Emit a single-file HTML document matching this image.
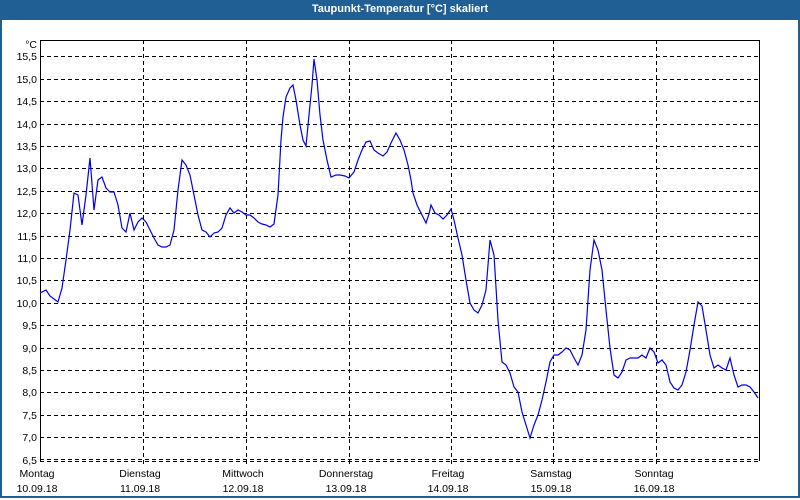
<!DOCTYPE html>
<html><head><meta charset="utf-8"><style>
html,body{margin:0;padding:0;width:800px;height:500px;overflow:hidden;background:#fff;font-family:"Liberation Sans",sans-serif}
.frame{position:absolute;left:0;top:0;width:796px;height:496px;border:2px solid #1f5f94;border-top:none;}
.title{position:absolute;left:0;top:0;width:800px;height:20px;background:#1f5f94;color:#fff;font-weight:bold;font-size:11px;text-align:center;line-height:18px}
svg{position:absolute;left:0;top:0}
</style></head><body>
<div class="frame"></div>
<div class="title">Taupunkt-Temperatur [°C] skaliert</div>
<svg width="800" height="500" font-family="Liberation Sans, sans-serif" font-size="10.5">
<g stroke="#000" stroke-width="1" stroke-dasharray="4,3">
<line x1="40" x2="760" y1="56.5" y2="56.5"/><line x1="40" x2="760" y1="79.5" y2="79.5"/><line x1="40" x2="760" y1="101.5" y2="101.5"/><line x1="40" x2="760" y1="124.5" y2="124.5"/><line x1="40" x2="760" y1="146.5" y2="146.5"/><line x1="40" x2="760" y1="168.5" y2="168.5"/><line x1="40" x2="760" y1="191.5" y2="191.5"/><line x1="40" x2="760" y1="213.5" y2="213.5"/><line x1="40" x2="760" y1="236.5" y2="236.5"/><line x1="40" x2="760" y1="258.5" y2="258.5"/><line x1="40" x2="760" y1="280.5" y2="280.5"/><line x1="40" x2="760" y1="303.5" y2="303.5"/><line x1="40" x2="760" y1="325.5" y2="325.5"/><line x1="40" x2="760" y1="348.5" y2="348.5"/><line x1="40" x2="760" y1="370.5" y2="370.5"/><line x1="40" x2="760" y1="392.5" y2="392.5"/><line x1="40" x2="760" y1="415.5" y2="415.5"/><line x1="40" x2="760" y1="437.5" y2="437.5"/><line x1="40" x2="760" y1="459.5" y2="459.5"/>
<line x1="143.5" x2="143.5" y1="40" y2="464"/><line x1="246.5" x2="246.5" y1="40" y2="464"/><line x1="349.5" x2="349.5" y1="40" y2="464"/><line x1="451.5" x2="451.5" y1="40" y2="464"/><line x1="553.5" x2="553.5" y1="40" y2="464"/><line x1="656.5" x2="656.5" y1="40" y2="464"/>
</g>
<polyline fill="none" stroke="#000" stroke-width="1" points="40.5,461 40.5,40.5 759.5,40.5 759.5,461"/>
<line x1="40" x2="760" y1="461.5" y2="461.5" stroke="#000" stroke-dasharray="4,3"/>
<polyline fill="none" stroke="#0000ee" stroke-width="1.2" points="40,293 46,290 50,296 54,299 58,302 62,288 66,260 70,230 74,193 78,195 82,225 86,195 90,158 94,210 98,180 102,177 106,188 110,192 114,192 118,205 122,228 126,232 130,213 134,230 138,222 142,218 146,222 150,230 154,238 158,245 162,247 166,247 170,245 174,230 178,190 182,160 186,165 190,175 194,195 198,215 202,230 206,232 210,237 214,233 218,232 222,228 226,215 230,208 234,213 238,210 242,212 246,215 250,215 254,218 258,222 262,224 266,225 270,227 274,224 278,195 281,140 283,117 286,97 290,88 293,85 296,100 300,125 303,140 306,146 309,115 312,85 314,59 317,80 320,115 323,140 327,160 331,177 336,175 340,175 345,176 349,178 354,172 358,160 362,150 366,142 370,141 374,150 378,153 383,156 387,152 391,143 396,133 400,140 404,150 408,165 411,180 413,193 417,205 422,215 426,223 429,214 431,205 435,213 439,215 443,219 447,215 451,209 454,220 458,238 462,255 466,280 470,303 474,310 478,313 482,305 486,290 490,240 494,255 498,320 502,362 506,365 510,373 514,387 518,392 522,412 526,425 530,438 534,425 538,415 542,400 546,382 550,362 554,355 558,355 562,352 566,348 570,350 574,358 578,365 582,355 586,330 590,270 594,240 598,250 602,270 606,310 610,348 614,375 618,378 622,372 626,360 630,358 634,358 638,358 642,355 646,358 650,348 654,352 658,363 662,360 666,365 670,382 674,388 678,390 682,385 686,372 690,350 694,325 698,302 702,306 706,330 710,355 714,368 718,365 722,368 726,370 730,358 734,375 738,387 742,385 746,385 750,387 754,392 758,398"/>
<g text-anchor="end" fill="#000">
<text x="37" y="48">°C</text>
<text x="37" y="60">15,5</text><text x="37" y="83">15,0</text><text x="37" y="105">14,5</text><text x="37" y="128">14,0</text><text x="37" y="150">13,5</text><text x="37" y="172">13,0</text><text x="37" y="195">12,5</text><text x="37" y="217">12,0</text><text x="37" y="240">11,5</text><text x="37" y="262">11,0</text><text x="37" y="284">10,5</text><text x="37" y="307">10,0</text><text x="37" y="329">9,5</text><text x="37" y="352">9,0</text><text x="37" y="374">8,5</text><text x="37" y="396">8,0</text><text x="37" y="419">7,5</text><text x="37" y="441">7,0</text><text x="37" y="464">6,5</text>
</g>
<g text-anchor="middle" fill="#000">
<text x="37" y="477">Montag</text><text x="37" y="492">10.09.18</text>
<text x="140" y="477">Dienstag</text><text x="140" y="492">11.09.18</text>
<text x="243" y="477">Mittwoch</text><text x="243" y="492">12.09.18</text>
<text x="346" y="477">Donnerstag</text><text x="346" y="492">13.09.18</text>
<text x="448" y="477">Freitag</text><text x="448" y="492">14.09.18</text>
<text x="551" y="477">Samstag</text><text x="551" y="492">15.09.18</text>
<text x="654" y="477">Sonntag</text><text x="654" y="492">16.09.18</text>
</g>
</svg>
</body></html>
